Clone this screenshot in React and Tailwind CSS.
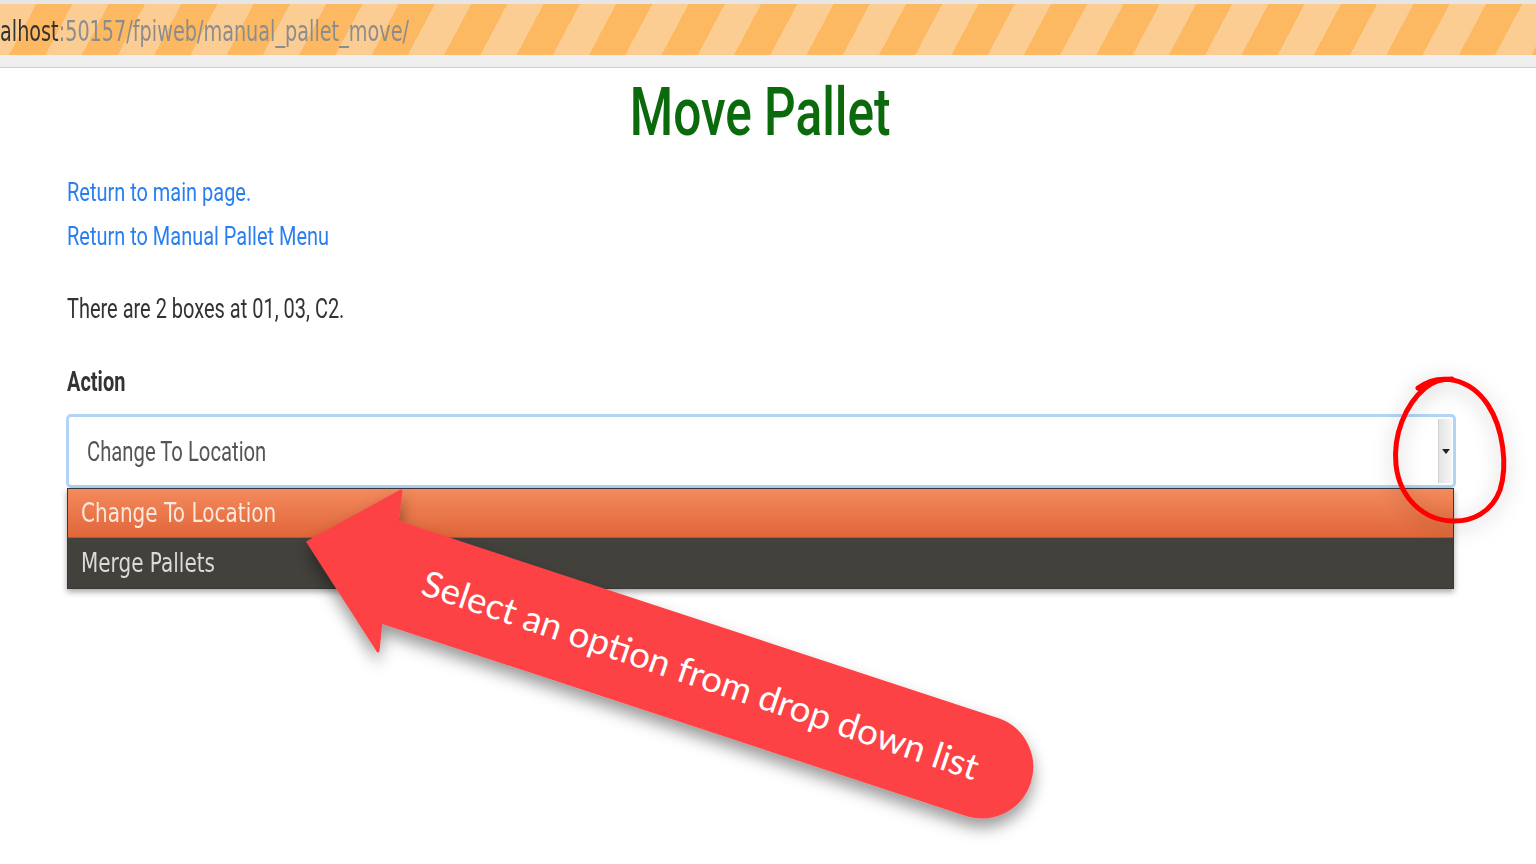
import React from 'react';

const stripes =
  'bg-[repeating-linear-gradient(118deg,#fccd93_0px,#fccd93_32px,#fdb862_32px,#fdb862_64px)]';

const UrlBar = () => (
  <div>
    <div className="h-[4px] bg-[#e6e6e6]" />
    <div className={`h-[51px] ${stripes} overflow-hidden whitespace-nowrap pt-[2px]`}>
      <span className="inline-block origin-left scale-x-[0.687] font-['DejaVu_Sans',sans-serif] text-[28px] leading-[51px]">
        <span className="text-[#333]">alhost</span>
        <span className="text-[#8c8c8c]">:50157/fpiweb/manual_pallet_move/</span>
      </span>
    </div>
    <div className="h-[13px] bg-[#efefef] border-b border-[#cfcfcf]" />
  </div>
);

const Annotations = () => (
  <svg className="absolute left-0 top-0 pointer-events-none" width="1536" height="864" viewBox="0 0 1536 864">
    <defs>
      <filter id="arrowShadow" x="-20%" y="-20%" width="140%" height="160%">
        <feDropShadow dx="0" dy="9" stdDeviation="8" floodColor="#000" floodOpacity="0.4" />
      </filter>
      <filter id="circleShadow" x="-50%" y="-50%" width="200%" height="200%">
        <feDropShadow dx="0" dy="4" stdDeviation="10" floodColor="#000" floodOpacity="0.25" />
      </filter>
    </defs>
    <g filter="url(#circleShadow)">
      <path
        d="M1418,388 C1440,372 1470,378 1488,405 C1503,428 1508,465 1500,490 C1492,512 1472,522 1452,521 C1425,520 1400,500 1396,465 C1393,435 1405,405 1425,388 C1432,382 1442,379 1452,379"
        fill="none"
        stroke="#ff0000"
        strokeWidth="5"
        strokeLinecap="round"
      />
    </g>
    <g filter="url(#arrowShadow)">
      <path
        d="M308,542 L401,491 L397,522 L999,720 A50,50 0 0 1 968,815 L381,622 L378,651 Z"
        fill="#fd4244"
        stroke="#fd4244"
        strokeWidth="3"
        strokeLinejoin="round"
      />
    </g>
    <text
      x="701"
      y="674"
      transform="rotate(18.6 701 674)"
      textAnchor="middle"
      dominantBaseline="central"
      fontSize="36"
      fontFamily="Lato, sans-serif"
      fill="#ffffff"
      textLength="585"
      lengthAdjust="spacingAndGlyphs"
    >
      Select an option from drop down list
    </text>
  </svg>
);

export default function App() {
  return (
    <div className="relative h-[864px] w-[1536px] overflow-hidden bg-white font-['Roboto',sans-serif]">
      <UrlBar />

      <div className="mt-[11px] h-[67px] pr-[15px] text-center whitespace-nowrap">
        <span className="inline-block origin-center scale-x-[0.74] text-[67px] leading-[67px] font-medium text-[#0b6a0b]">
          Move Pallet
        </span>
      </div>

      <div className="px-[67px] mt-[24px]">
        <div className="h-[44px] whitespace-nowrap">
          <a className="inline-block origin-left scale-x-[0.768] text-[26px] leading-[44px] text-[#2a7ff0]">
            Return to main page.
          </a>
        </div>
        <div className="h-[44px] whitespace-nowrap">
          <a className="inline-block origin-left scale-x-[0.768] text-[26px] leading-[44px] text-[#2a7ff0]">
            Return to Manual Pallet Menu
          </a>
        </div>

        <div className="mt-[31px] h-[40px] whitespace-nowrap">
          <span className="inline-block origin-left scale-x-[0.74] text-[27px] leading-[40px] text-[#333]">
            There are 2 boxes at 01, 03, C2.
          </span>
        </div>

        <div className="mt-[33px] h-[40px] whitespace-nowrap">
          <span className="inline-block origin-left scale-x-[0.74] text-[27px] leading-[40px] font-bold text-[#333]">
            Action
          </span>
        </div>

        <div className="mt-[12px] -ml-[1px] w-[1390px] h-[74px] rounded-[5px] border-[3px] border-[#b2d4f7] bg-white flex items-stretch">
          <div className="flex-1 flex items-center pl-[18px] pt-[3px] whitespace-nowrap">
            <span className="inline-block origin-left scale-x-[0.75] text-[27px] text-[#555]">
              Change To Location
            </span>
          </div>
          <div className="my-[2px] mr-[1px] w-[14px] flex items-center justify-center border-l border-[#d2d2d2] bg-[linear-gradient(90deg,#e4e4e4,#f6f6f6)]">
            <span className="w-0 h-0 border-l-[4px] border-r-[4px] border-t-[5px] border-l-transparent border-r-transparent border-t-[#222]" />
          </div>
        </div>

        <div className="w-[1387px] border border-[#3a3836] shadow-[0_3px_6px_rgba(0,0,0,0.35)] font-['DejaVu_Sans',sans-serif] whitespace-nowrap">
          <div className="h-[49px] pl-[13px] flex items-center bg-[linear-gradient(180deg,#f48a5c,#e0663a)] border-b border-[#b8552c]">
            <span className="inline-block origin-left scale-x-[0.77] text-[26px] text-[#fbe8de]">
              Change To Location
            </span>
          </div>
          <div className="h-[50px] pl-[13px] flex items-center bg-[#43413c]">
            <span className="inline-block origin-left scale-x-[0.77] text-[26px] text-[#dcdad4]">
              Merge Pallets
            </span>
          </div>
        </div>
      </div>

      <Annotations />
    </div>
  );
}
